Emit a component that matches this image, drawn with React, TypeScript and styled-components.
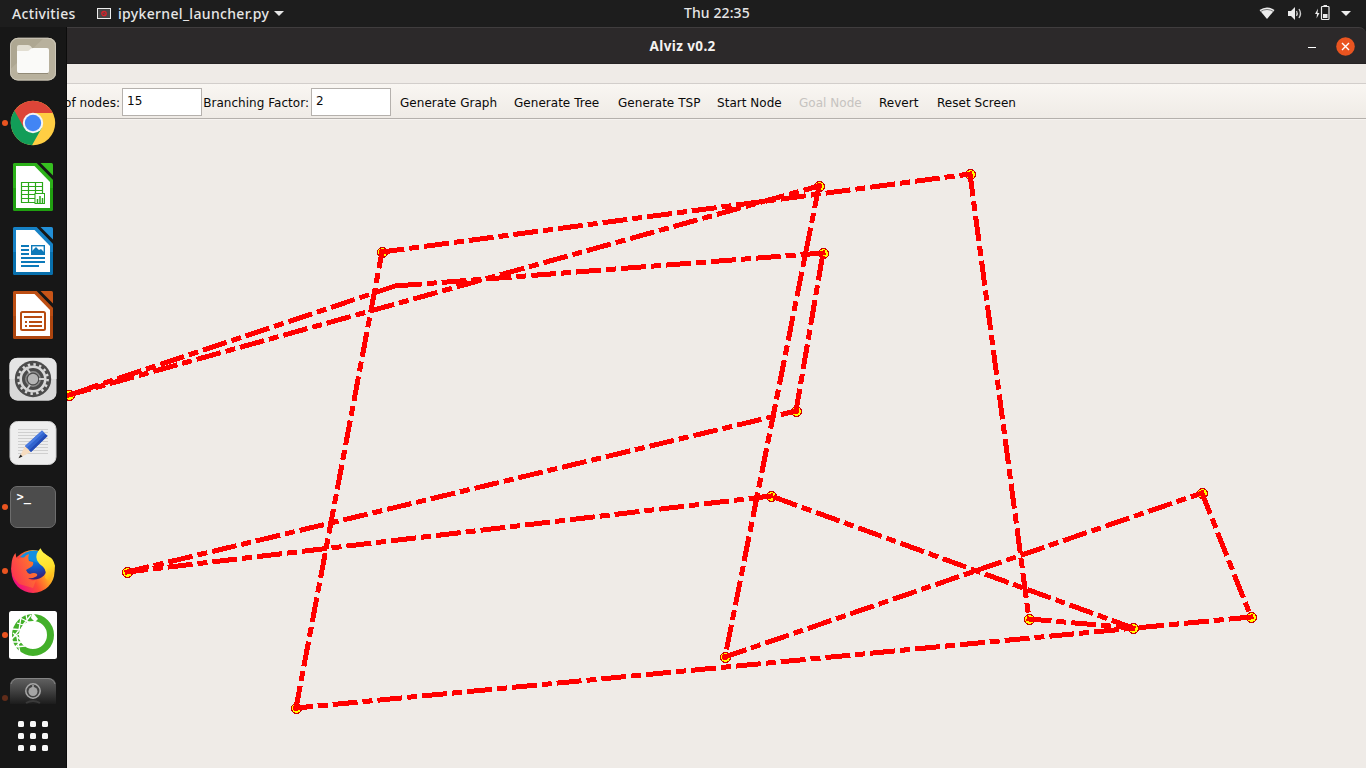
import React from "react";
import styled, { createGlobalStyle } from "styled-components";

const Global = createGlobalStyle`
  * { box-sizing: border-box; }
  html, body, #root { margin: 0; height: 100%; }
  body { overflow: hidden; background: #efebe7; }
`;

const Desktop = styled.div`
  width: 1366px;
  height: 768px;
  display: flex;
  flex-direction: column;
  overflow: hidden;
`;

const TopBar = styled.header`
  height: 27px;
  flex: none;
  display: grid;
  grid-template-columns: 1fr auto 1fr;
  align-items: center;
  padding: 0 14px 0 12px;
  background: #1d1d1d;
  color: #e6e6e6;
  font: 500 14px/27px "Noto Sans", sans-serif;
`;

const BarGroup = styled.div<{ $end?: boolean }>`
  display: flex;
  align-items: center;
  justify-content: ${(p) => (p.$end ? "flex-end" : "flex-start")};
`;

const BarText = styled.span<{ $width: number }>`
  width: ${(p) => p.$width}px;
  letter-spacing: 0.33px;
  white-space: nowrap;
`;

const Clock = styled.time`
  width: 66px;
  height: 27px;
  margin-left: 70px;
  line-height: 25px;
  letter-spacing: 0.1px;
  white-space: nowrap;
`;

const Body = styled.div`
  flex: 1;
  min-height: 0;
  display: flex;
`;

const Dock = styled.nav`
  width: 67px;
  flex: none;
  display: flex;
  flex-direction: column;
  background: #171717;
  border-right: 1px solid #0c0c0c;
`;

const DockItem = styled.div<{ $running?: boolean; $dim?: boolean; $folded?: boolean }>`
  height: ${(p) => (p.$folded ? 37 : 64)}px;
  flex: none;
  display: flex;
  align-items: ${(p) => (p.$folded ? "flex-end" : "center")};
  &::before {
    content: "";
    width: 6px;
    height: 6px;
    margin: 0 1px ${(p) => (p.$folded ? 3 : 0)}px 2px;
    border-radius: 50%;
    background: ${(p) => (p.$running ? "#e95420" : "transparent")};
    opacity: ${(p) => (p.$dim ? 0.35 : 1)};
  }
  svg { display: block; }
`;

const AppsButton = styled.div`
  display: grid;
  grid-template-columns: repeat(3, 6px);
  gap: 6px;
  padding: 17px 0 0 18px;
`;

const AppsDot = styled.i`
  height: 6px;
  border-radius: 1.5px;
  background: #f7f7f7;
`;

const Window = styled.main`
  flex: 1;
  min-width: 0;
  display: flex;
  flex-direction: column;
  background: #efebe7;
`;

const TitleBar = styled.div`
  height: 37px;
  flex: none;
  display: grid;
  grid-template-columns: 1fr auto 1fr;
  align-items: center;
  padding: 1px 11px 0 0;
  background: #2c292a;
  border-top: 1px solid #403d3e;
  border-bottom: 1px solid #252223;
  border-top-right-radius: 7px;
`;

const TitleBackdrop = styled.div`
  background: #1b1b1b;
`;

const Title = styled.h1`
  margin: 0;
  width: 123px;
  padding-right: 55px;
  color: #f4f2f0;
  white-space: nowrap;
  letter-spacing: 0.4px;
  font: 700 13.5px/34px "Noto Sans", sans-serif;
`;

const Controls = styled.div`
  display: flex;
  justify-content: flex-end;
  align-items: center;
  gap: 20px;
`;

const MenuStrip = styled.div`
  height: 20px;
  flex: none;
  border-bottom: 1px solid #d2cecb;
`;

const Toolbar = styled.div`
  height: 35px;
  flex: none;
  display: flex;
  align-items: center;
  background: linear-gradient(#f9f6f2, #efebe6);
  border-bottom: 1px solid #b4b0ac;
  box-shadow: 0 1px #f6f3f0;
  color: #0a0a0a;
  font: 12px/18px "DejaVu Sans", sans-serif;
  letter-spacing: 0.03px;
  white-space: nowrap;
`;

const FieldLabel = styled.label<{ $width: number }>`
  width: ${(p) => p.$width}px;
  flex: none;
  display: flex;
  justify-content: flex-end;
  overflow: hidden;
  padding: 3px 2px 0 0;
`;

const Field = styled.input`
  width: 80px;
  height: 28px;
  flex: none;
  margin: 1px 0 0;
  padding: 0 4px 2px;
  border: 1px solid #b5b1ad;
  border-radius: 0;
  outline: none;
  background: #fff;
  color: #0a0a0a;
  font: 12px "DejaVu Sans", sans-serif;
`;

const ToolButton = styled.button<{ $width: number }>`
  width: ${(p) => p.$width}px;
  flex: none;
  padding: 3px 0 0;
  border: 0;
  background: none;
  text-align: left;
  white-space: nowrap;
  font: inherit;
  letter-spacing: inherit;
  color: #0a0a0a;
  &:disabled { color: #c6c3c0; }
`;

const Buttons = styled.div`
  display: flex;
  padding-left: 9px;
`;

const Canvas = styled.svg`
  display: block;
  flex: 1;
  min-height: 0;
`;

type Point = [number, number];

const hiddenNode = 9;
const tour: Point[] = [
  [296, 708], [382, 252], [970, 174], [1029, 619], [1133, 628],
  [771, 496], [127, 572], [796, 411], [823, 253], [395, 286],
  [69, 395], [819, 186], [725, 657], [1202, 493], [1251, 617],
];

function TourCanvas() {
  return (
    <Canvas viewBox="67 119 1299 649" shapeRendering="crispEdges">
      {tour.map(([x, y], i) =>
        i === hiddenNode ? null : (
          <circle key={i} cx={x + 0.5} cy={y + 0.5} r="5" fill="#ff0" stroke="#d00000" strokeWidth="1" />
        )
      )}
      {tour.map(([x, y], i) => {
        const [nx, ny] = tour[(i + 1) % tour.length];
        return (
          <line key={i} x1={x} y1={y} x2={nx} y2={ny} stroke="#f00" strokeWidth="5" strokeDasharray="20 10 5 10" strokeLinecap="square" />
        );
      })}
    </Canvas>
  );
}

const Icon = ({ children }: { children: React.ReactNode }) => (
  <svg width="48" height="48" viewBox="0 0 48 48">{children}</svg>
);

const FilesIcon = () => (
  <Icon>
    <rect x="1" y="2.8" width="46" height="42.7" rx="8" fill="#aea792" />
    <path d="M1.5 34 35 3h4q8 0 8 8v26q0 8-8 8H9q-7.5 0-7.5-8z" fill="#b8b19d" />
    <rect x="1.5" y="3.3" width="45" height="41.7" rx="7.5" fill="none" stroke="#cbc6b8" strokeWidth="1" />
    <path d="M8 17v-5q0-2 2-2h9q2 0 3 1.5l2 3H38v6H8z" fill="#e2ded2" />
    <path d="M8 16h10q2 0 3-1.5t3-1.5h14q2 0 2 2v21q0 2-2 2H10q-2 0-2-2z" fill="#fafaf8" />
    <path d="M9 38.5h30" stroke="#918a77" />
  </Icon>
);

const ChromeIcon = () => (
  <Icon>
    <circle cx="24" cy="24" r="22.2" fill="#ffce43" />
    <path d="M24 24 5.5 11.8A22.2 22.2 0 0 0 23 46.2L33 28.5z" fill="#129d58" />
    <path d="M5.5 11.8A22.2 22.2 0 0 1 43.8 14H24L14.5 28z" fill="#dd4538" />
    <circle cx="24" cy="24" r="10.2" fill="#f4f4f4" />
    <circle cx="24" cy="24" r="8.2" fill="#4285f4" />
  </Icon>
);

function OfficeIcon({ color, dark, children }: { color: string; dark: string; children: React.ReactNode }) {
  return (
    <Icon>
      <path d="M5.5 0H27.500L44 17v29.500q0 1.500-1.500 1.500h-37Q4 48 4 46.500v-45Q4 0 5.500 0z" fill={dark} />
      <path d="M5.5 0H27.500L44 17v8H4V1.500Q4 0 5.500 0z" fill={color} opacity=".55" />
      <path d="M7 3h18.500L41 19V45H7z" fill="#fff" />
      <path d="M31.500 0h11Q44 0 44 1.500V12.500z" fill={color} />
      {children}
    </Icon>
  );
}

const CalcIcon = () => (
  <OfficeIcon color="#36c020" dark="#20a010">
    <path d="M12.500 19.500h21v20h-21zM12 23.500h22M12 27.500h22M12 31.500h22M12 35.500h22M19.500 19.500v20M26.500 19.500v20" fill="none" stroke="#2aa818" strokeWidth="1.2" />
    <rect x="26" y="30.5" width="9.500" height="10" fill="#fff" stroke="#2aa818" />
    <path d="M28.500 40v-4M31 40v-7M33.500 40v-5" stroke="#2aa818" strokeWidth="1.5" />
  </OfficeIcon>
);

const WriterIcon = () => (
  <OfficeIcon color="#2290d8" dark="#0870ad">
    <path d="M12 19h8M12 23h8M12 27h8M12 31h24M12 35h24M12 39h18" stroke="#0c79b9" strokeWidth="2" />
    <rect x="22.700" y="18.700" width="12.600" height="8.600" fill="#fff" stroke="#0c79b9" strokeWidth="1.4" />
    <path d="M23 27v-3l4-4 3 3 2-1 3 3v2z" fill="#0c79b9" />
  </OfficeIcon>
);

const ImpressIcon = () => (
  <OfficeIcon color="#c85518" dark="#ae450e">
    <rect x="12" y="21" width="24" height="18" rx="1.5" fill="#fff" stroke="#b84b10" strokeWidth="2" />
    <path d="M15 26h18M16 31h2M20 31h13M16 35h2M20 35h13" stroke="#b84b10" strokeWidth="1.8" />
  </OfficeIcon>
);

const SettingsIcon = () => (
  <Icon>
    <rect x=".5" y="2.7" width="47" height="43" rx="8" fill="#d8d8d8" />
    <path d="M.5 24V11Q.5 3 8.500 3h31q8 0 8 8v13z" fill="#e5e5e5" />
    <circle cx="24" cy="24" r="18.2" fill="#4b4b4b" />
    <circle cx="24" cy="24" r="12.3" fill="none" stroke="#d8d8d8" strokeWidth="2.6" />
    <circle cx="24" cy="24" r="14.6" fill="none" stroke="#d8d8d8" strokeWidth="2.6" strokeDasharray="2.4 3.334" />
    <circle cx="24" cy="24" r="5.2" fill="#b5b5b5" />
    <circle cx="24" cy="24" r="7.2" fill="none" stroke="#8c8c8c" strokeWidth="1.4" />
    <path d="m21 18-4-6M21 30l-4 6M30 24h6" stroke="#d0d0d0" strokeWidth="2" />
  </Icon>
);

const EditorIcon = () => (
  <Icon>
    <rect x="1" y="2.5" width="46" height="43" rx="7.5" fill="#eee" stroke="#d2d2d2" />
    <path d="M9 10.500h30M9 13.500h30M9 16.500h30M9 19.500h30M9 22.500h30M9 25.500h30M9 28.500h30M9 31.500h30M9 34.500h30" stroke="#cfcfcf" />
    <path d="m16 27 6 6-12 6z" fill="#f6dcc0" />
    <path d="m11.500 35.500 2 2-4 1.800z" fill="#222" />
    <path d="m16 27 17-15.500 5.500 5.500-16.500 16z" fill="#3164cf" />
    <path d="m16 27 17-15.500 1.800 1.800-17 15.500z" fill="#4a7be0" />
    <path d="m20.200 31.200 16.500-16 1.800 1.800-16.500 16z" fill="#244bb5" />
  </Icon>
);

const Prompt = styled.text`
  font: 700 12px "DejaVu Sans Mono", monospace;
  fill: #fff;
`;

const TerminalIcon = () => (
  <Icon>
    <rect x="1.500" y="3.500" width="45" height="41" rx="6.500" fill="#4c4c4c" stroke="#6d6d6d" />
    <Prompt x="7.500" y="18">&gt;_</Prompt>
  </Icon>
);

const FirefoxIcon = () => (
  <Icon>
    <defs>
      <linearGradient id="fx" x1="1" y1=".2" x2=".1" y2=".7">
        <stop offset="0" stopColor="#fff13a" />
        <stop offset=".35" stopColor="#ffa822" />
        <stop offset=".65" stopColor="#ff4a35" />
        <stop offset="1" stopColor="#f0127a" />
      </linearGradient>
      <radialGradient id="fxGlobe" cx=".5" cy=".1" r=".9">
        <stop offset="0" stopColor="#0aa0ee" />
        <stop offset=".55" stopColor="#1258c6" />
        <stop offset="1" stopColor="#3a1a70" />
      </radialGradient>
      <linearGradient id="fxFlame" x1=".4" y1="0" x2=".6" y2="1">
        <stop offset="0" stopColor="#fff44a" />
        <stop offset=".6" stopColor="#ffe02b" />
        <stop offset="1" stopColor="#ffae18" />
      </linearGradient>
      <linearGradient id="fxHead" x1="1" y1="0" x2="0" y2=".6">
        <stop offset="0" stopColor="#ff8a22" />
        <stop offset="1" stopColor="#fb3550" />
      </linearGradient>
    </defs>
    <circle cx="24" cy="24.500" r="21.500" fill="url(#fx)" />
    <circle cx="25" cy="18.500" r="14" fill="url(#fxGlobe)" />
    <path d="M11 10Q17 3.500 25 3.500t14 8L30 16z" fill="#118fe0" />
    <path d="M6.500 6q0 4 2.500 6 3-2 6-1.500 2-3 5-3.500-1.500 4 0 7l4 1q1 3-2 5l-5 3q1 3 4 4 4-2 7 0 1 2-2 3-3 2-7 1 3 4 8 2l-3 8-14-4Q0 28 2.500 17q.5-7 4-11z" fill="url(#fxHead)" />
    <path d="M31.500 1.300q-6 6-3.500 12 2 4 6 6.500 4 4 2 11l3 3q7-5 7-15-2-8-6-9-6-3-8.500-8.500z" fill="url(#fxFlame)" />
  </Icon>
);

const AnacondaIcon = () => (
  <Icon>
    <rect width="48" height="48" rx="2.5" fill="#fff" />
    <circle cx="24" cy="24" r="17.500" fill="none" stroke="#43b02a" strokeWidth="7" />
    <path d="M17 3l2 12M11 7l11 5M22 4l-8 10M8 12l9 3M12 6l-2 13M3 18l11 1M10 19 3 28M4 22l9 8M12 22l-9 5M3 31l13 0M14 29 6 36M8 26l3 16M6 36l10-1" fill="none" stroke="#fff" strokeWidth="1.3" />
    <path d="m23 2-1 5 3 3-4 4 3-1 5-5-4-5z" fill="#fff" />
  </Icon>
);

const FoldedAppIcon = () => (
  <svg width="48" height="26" viewBox="0 0 48 26">
    <defs>
      <linearGradient id="fold" x1="0" y1="0" x2="0" y2="1">
        <stop offset="0" stopColor="#626262" />
        <stop offset=".5" stopColor="#414141" />
        <stop offset="1" stopColor="#1c1c1c" />
      </linearGradient>
    </defs>
    <path d="M1 26V8q0-8 8-8h30q8 0 8 8v18z" fill="url(#fold)" />
    <path d="M2 6q2-5.500 7-5.500h30q5 0 7 5.500" fill="none" stroke="#858585" />
    <circle cx="24" cy="13" r="7.200" fill="#444" stroke="#a8a8a8" strokeWidth="1.5" />
    <circle cx="24" cy="13.500" r="4.500" fill="#a5a5a5" />
    <path d="M24 7v4" stroke="#a8a8a8" strokeWidth="1.5" />
    <path d="M17 25q7-4 14 0" fill="none" stroke="#3a3a3a" strokeWidth="2" />
  </svg>
);

const Caret = styled.svg`
  margin-left: 5px;
`;

const AppName = styled(BarText)`
  margin-left: 7px;
`;

const dock = [
  { id: "files", icon: <FilesIcon /> },
  { id: "chrome", icon: <ChromeIcon />, running: true },
  { id: "calc", icon: <CalcIcon /> },
  { id: "writer", icon: <WriterIcon /> },
  { id: "impress", icon: <ImpressIcon /> },
  { id: "settings", icon: <SettingsIcon /> },
  { id: "editor", icon: <EditorIcon /> },
  { id: "terminal", icon: <TerminalIcon />, running: true },
  { id: "firefox", icon: <FirefoxIcon />, running: true },
  { id: "anaconda", icon: <AnacondaIcon />, running: true },
];

const actions = [
  { label: "Generate Graph", width: 114 },
  { label: "Generate Tree", width: 104 },
  { label: "Generate TSP", width: 99 },
  { label: "Start Node", width: 82 },
  { label: "Goal Node", width: 80, disabled: true },
  { label: "Revert", width: 58 },
  { label: "Reset Screen", width: 90 },
];

export default function App() {
  return (
    <Desktop>
      <Global />
      <TopBar>
        <BarGroup>
          <BarText $width={85}>Activities</BarText>
          <svg width="14" height="11" viewBox="0 0 14 11">
            <rect x=".5" y=".5" width="13" height="10" fill="#474747" stroke="#eee" />
            <circle cx="7" cy="5.500" r="2.200" fill="none" stroke="#d8222a" strokeWidth="1.3" />
            <path d="m5.500 4 3 3" stroke="#d8222a" />
          </svg>
          <AppName $width={151}>ipykernel_launcher.py</AppName>
          <Caret width="10" height="5" viewBox="0 0 10 5"><path d="M0 0h10L5 5z" fill="#e6e6e6" /></Caret>
        </BarGroup>
        <Clock>Thu 22:35</Clock>
        <BarGroup $end>
          <svg width="93" height="17" viewBox="0 0 93 17">
            <path d="M.5 5Q8 0 15.500 5L8 14z" fill="#ececec" />
            <path d="M1.500 6.500q6.500-4 13 0" fill="none" stroke="#777" strokeWidth="1" />
            <path d="M29 6h3l4-4v13l-4-4h-3z" fill="#ececec" />
            <path d="M37.500 6q1.500 2.500 0 5M40 4q3 4.500 0 9" fill="none" stroke="#ccc" strokeWidth="1.3" />
            <path d="m59 3.500-3 5.500h2l-.5 4.500L60.500 8h-2z" fill="#ececec" />
            <rect x="62.500" y="1.500" width="7.500" height="13" rx=".8" fill="none" stroke="#ececec" strokeWidth="1.2" />
            <path d="M64.500 0h3.500v1.500h-3.500zM64 9h4.500v4H64z" fill="#ececec" />
            <path d="M82 6h10l-5 5z" fill="#ececec" />
          </svg>
        </BarGroup>
      </TopBar>
      <Body>
        <Dock>
          {dock.map((d) => (
            <DockItem key={d.id} $running={d.running}>{d.icon}</DockItem>
          ))}
          <DockItem $running $dim $folded><FoldedAppIcon /></DockItem>
          <AppsButton>
            {Array.from({ length: 9 }, (_, i) => <AppsDot key={i} />)}
          </AppsButton>
        </Dock>
        <Window>
          <TitleBackdrop>
            <TitleBar>
              <span />
              <Title>Alviz v0.2</Title>
              <Controls>
                <svg width="8" height="8" viewBox="0 0 8 8"><path d="M0 5.500h8" stroke="#fff" /></svg>
                <svg width="19" height="19" viewBox="0 0 19 19">
                  <circle cx="9.500" cy="9.500" r="9.300" fill="#e95420" />
                  <path d="m6 6 7 7M13 6l-7 7" stroke="#fff" strokeWidth="1.4" />
                </svg>
              </Controls>
            </TitleBar>
          </TitleBackdrop>
          <MenuStrip />
          <Toolbar>
            <FieldLabel $width={55}>of nodes:</FieldLabel>
            <Field defaultValue="15" />
            <FieldLabel $width={109}>Branching Factor:</FieldLabel>
            <Field defaultValue="2" />
            <Buttons>
              {actions.map((a) => (
                <ToolButton key={a.label} $width={a.width} disabled={a.disabled}>{a.label}</ToolButton>
              ))}
            </Buttons>
          </Toolbar>
          <TourCanvas />
        </Window>
      </Body>
    </Desktop>
  );
}
